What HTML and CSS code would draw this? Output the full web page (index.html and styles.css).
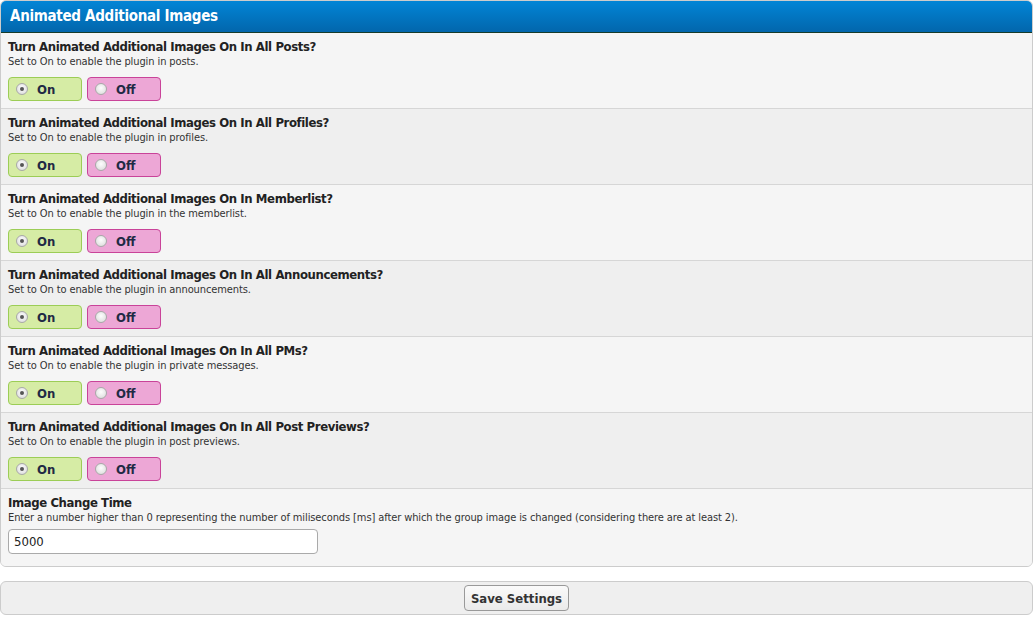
FILE: index.html
```html
<!DOCTYPE html>
<html>
<head>
<meta charset="utf-8">
<link rel="stylesheet" href="styles.css">
</head>
<body>
<div class="panel">
  <div class="panel-head">Animated Additional Images</div>
  <div class="row">
    <div class="title">Turn Animated Additional Images On In All Posts?</div>
    <div class="desc">Set to On to enable the plugin in posts.</div>
    <div class="choices">
      <label class="choice on"><span class="radio checked"></span>On</label>
      <label class="choice off"><span class="radio"></span>Off</label>
    </div>
  </div>
  <div class="row alt">
    <div class="title">Turn Animated Additional Images On In All Profiles?</div>
    <div class="desc">Set to On to enable the plugin in profiles.</div>
    <div class="choices">
      <label class="choice on"><span class="radio checked"></span>On</label>
      <label class="choice off"><span class="radio"></span>Off</label>
    </div>
  </div>
  <div class="row">
    <div class="title">Turn Animated Additional Images On In Memberlist?</div>
    <div class="desc">Set to On to enable the plugin in the memberlist.</div>
    <div class="choices">
      <label class="choice on"><span class="radio checked"></span>On</label>
      <label class="choice off"><span class="radio"></span>Off</label>
    </div>
  </div>
  <div class="row alt">
    <div class="title">Turn Animated Additional Images On In All Announcements?</div>
    <div class="desc">Set to On to enable the plugin in announcements.</div>
    <div class="choices">
      <label class="choice on"><span class="radio checked"></span>On</label>
      <label class="choice off"><span class="radio"></span>Off</label>
    </div>
  </div>
  <div class="row">
    <div class="title">Turn Animated Additional Images On In All PMs?</div>
    <div class="desc">Set to On to enable the plugin in private messages.</div>
    <div class="choices">
      <label class="choice on"><span class="radio checked"></span>On</label>
      <label class="choice off"><span class="radio"></span>Off</label>
    </div>
  </div>
  <div class="row alt">
    <div class="title">Turn Animated Additional Images On In All Post Previews?</div>
    <div class="desc">Set to On to enable the plugin in post previews.</div>
    <div class="choices">
      <label class="choice on"><span class="radio checked"></span>On</label>
      <label class="choice off"><span class="radio"></span>Off</label>
    </div>
  </div>
  <div class="row last">
    <div class="title">Image Change Time</div>
    <div class="desc">Enter a number higher than 0 representing the number of miliseconds [ms] after which the group image is changed (considering there are at least 2).</div>
    <div class="field"><input class="text-input" type="text" value="5000"></div>
  </div>
</div>
<div class="save-bar">
  <button class="save-btn" type="button">Save Settings</button>
</div>
</body>
</html>
```
FILE: styles.css
```css
* { box-sizing: border-box; }
body {
  margin: 0;
  background: #fff;
  font-family: "DejaVu Sans Condensed", "DejaVu Sans", Verdana, sans-serif;
  color: #333;
  width: 1033px;
}
.panel {
  border: 1px solid #ccc;
  border-radius: 6px;
  overflow: hidden;
  background: #f5f5f5;
}
.panel-head {
  height: 32px;
  background: linear-gradient(#0285d6, #0266ac);
  border-bottom: 1px solid #163c2a;
  color: #fff;
  font-weight: bold;
  font-size: 15px;
  letter-spacing: -0.3px;
  line-height: 31px;
  padding-left: 9px;
}
.row {
  padding: 6px 7px 6px;
  border-bottom: 1px solid #d6d6d6;
  background: #f5f5f5;
  height: 76px;
}
.row.alt { background: #efefef; }
.row.last { border-bottom: none; height: 77px; }
.title {
  font-weight: bold;
  font-size: 13px;
  letter-spacing: -0.4px;
  line-height: 16px;
  color: #222;
}
.desc {
  font-size: 11px;
  letter-spacing: -0.1px;
  line-height: 13px;
  color: #333;
}
.choices {
  display: flex;
  gap: 5px;
  margin-top: 9px;
}
.choice {
  display: flex;
  align-items: center;
  width: 74px;
  height: 24px;
  border-radius: 4px;
  border: 1px solid;
  font-weight: bold;
  font-size: 13px;
  color: #1f2a44;
  padding-left: 7px;
}
.choice.on { background: #d6eca5; border-color: #9ccd56; }
.choice.off { background: #eda7d6; border-color: #c94399; }
.radio {
  width: 12px;
  height: 12px;
  border-radius: 50%;
  border: 1px solid #a8a8a8;
  background: radial-gradient(circle at 50% 40%, #fdfdfd, #d8d8d8);
  margin-right: 9px;
  display: flex;
  align-items: center;
  justify-content: center;
}
.radio.checked::after {
  content: "";
  width: 4px;
  height: 4px;
  border-radius: 50%;
  background: #555;
}
.field { margin-top: 5px; }
.text-input {
  width: 310px;
  height: 25px;
  border: 1px solid #aaa;
  border-radius: 4px;
  background: #fff;
  font-family: inherit;
  font-size: 13px;
  padding: 2px 5px;
  color: #222;
  outline: none;
}
.save-bar {
  margin-top: 14px;
  height: 34px;
  border: 1px solid #ccc;
  border-radius: 6px;
  background: #efefef;
  display: flex;
  justify-content: center;
  align-items: center;
}
.save-btn {
  width: 105px;
  height: 26px;
  border: 1px solid #999;
  border-radius: 4px;
  background: linear-gradient(#fafafa, #eaeaea);
  font-family: inherit;
  font-weight: bold;
  font-size: 13px;
  color: #333;
  padding: 0;
}
```
